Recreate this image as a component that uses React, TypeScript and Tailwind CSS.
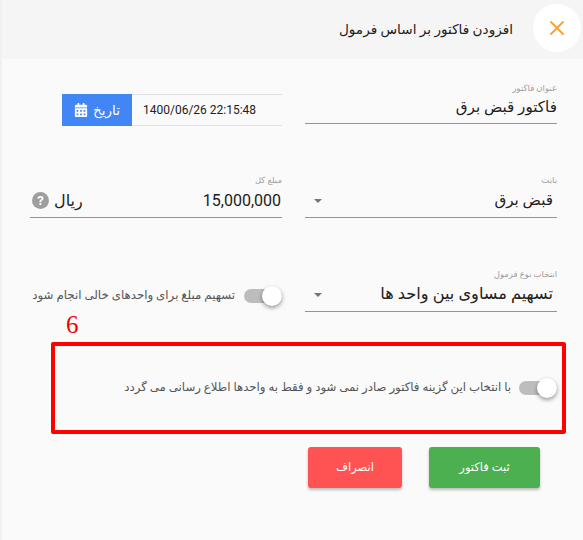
import { X } from 'lucide-react'
import { FaCalendarAlt } from 'react-icons/fa'

function FieldLabel({ children }: { children: string }) {
  return <div className="h-[12px] text-[8.5px] leading-[12px] text-[#9e9e9e]">{children}</div>
}

function Toggle() {
  return (
    <div className="relative h-[14px] w-[38px] shrink-0 rounded-full bg-[#bdbdbd]">
      <div className="absolute right-0 top-[-3px] h-5 w-5 rounded-full bg-white shadow-[0_2px_4px_rgba(0,0,0,0.4)]" />
    </div>
  )
}

function SelectField({ label, value, size }: { label: string; value: string; size: string }) {
  return (
    <div className="w-[252px]">
      <FieldLabel>{label}</FieldLabel>
      <div className="flex h-[32px] items-center justify-between border-b border-[#949494] pr-[4px] pb-[2px]">
        <span className={`${size} text-[#212121]`}>{value}</span>
        <span className="ml-[9px] h-0 w-0 border-x-[4px] border-t-[4px] border-x-transparent border-t-[#757575]" />
      </div>
    </div>
  )
}

export default function App() {
  return (
    <div
      dir="rtl"
      className="h-[540px] w-[583px] overflow-hidden border-l-2 border-[#f1f1f1] bg-[#fafafa]"
      style={{ fontFamily: 'Roboto, "DejaVu Sans", sans-serif' }}
    >
      <header className="flex h-[59px] items-center gap-[20px] bg-[#f5f5f5] pr-[2px]">
        <button className="mb-[3px] flex h-12 w-12 items-center justify-center rounded-full bg-white text-[#ff9f2f]">
          <X size={24} strokeWidth={1.8} />
        </button>
        <h1 className="text-[13.6px] font-normal text-[#212121]">افزودن فاکتور بر اساس فرمول</h1>
      </header>

      <div className="flex justify-between pt-[23px] pr-[26px] pl-[28px]">
        <div className="w-[252px]">
          <FieldLabel>عنوان فاکتور</FieldLabel>
          <div className="flex h-[30px] items-center border-b border-[#949494] pb-[2px] text-[15.2px] text-[#212121]">
            فاکتور قبض برق
          </div>
        </div>
        <div dir="ltr" className="mt-[12px] ml-[32px] flex h-[32px] w-[220px]">
          <div className="flex w-[70px] items-center justify-center gap-[5px] bg-[#4285f4] text-white">
            <FaCalendarAlt size={14} />
            <span dir="rtl" className="text-[13.5px]">تاریخ</span>
          </div>
          <div className="flex flex-1 items-center border-y border-[#e0e0e0] pl-[11px] pb-[1px] text-[12px] text-[#212121]">
            1400/06/26 22:15:48
          </div>
        </div>
      </div>

      <div className="mt-[48px] flex justify-between pr-[26px] pl-[28px]">
        <SelectField label="بابت" value="قبض برق" size="text-[15.2px]" />
        <div className="w-[252px]">
          <FieldLabel>مبلغ کل</FieldLabel>
          <div className="flex h-[32px] items-center justify-between border-b border-[#949494] pr-px pb-[2px]">
            <span className="text-[16px] text-[#212121]">15,000,000</span>
            <div className="flex items-center gap-[5px] pl-[2px]">
              <span className="text-[16px] text-[#212121]">ریال</span>
              <span className="flex h-[17px] w-[17px] items-center justify-center rounded-full bg-[#9e9e9e] text-[13px] font-bold text-white">
                ?
              </span>
            </div>
          </div>
        </div>
      </div>

      <div className="mt-[50px] flex justify-between pr-[26px] pl-[28px]">
        <SelectField label="انتخاب نوع فرمول" value="تسهیم مساوی بین واحد ها" size="text-[16.2px]" />
        <div className="mt-[18px] flex h-[20px] w-[252px] items-center gap-[9px]">
          <Toggle />
          <span className="text-[11.8px] font-medium whitespace-nowrap text-[#555555]">
            تسهیم مبلغ برای واحدهای خالی انجام شود
          </span>
        </div>
      </div>

      <div
        className="mt-[1px] ml-[26px] h-[24px] text-left text-[25px] leading-[24px] text-[#f00000]"
        style={{ fontFamily: '"Liberation Serif", serif' }}
      >
        <span className="ml-[38px]">6</span>
      </div>

      <div className="mt-[5px] mr-[17px] ml-[49px] flex h-[92px] items-center gap-[8px] rounded-[2px] border-4 border-[#ff0000] pr-[5px]">
        <Toggle />
        <span className="text-[11.75px] font-medium whitespace-nowrap text-[#555555]">
          با انتخاب این گزینه فاکتور صادر نمی شود و فقط به واحدها اطلاع رسانی می گردد
        </span>
      </div>

      <div className="mt-[13px] flex gap-[27px] pr-[43px]">
        <button className="h-[41px] w-[111px] rounded-[3px] bg-[#4caf50] text-[11.5px] font-medium text-white shadow-[0_2px_3px_rgba(0,0,0,0.25)]">
          ثبت فاکتور
        </button>
        <button className="h-[41px] w-[94px] rounded-[3px] bg-[#ff5252] text-[11.5px] font-medium text-white shadow-[0_2px_3px_rgba(0,0,0,0.25)]">
          انصراف
        </button>
      </div>
    </div>
  )
}
